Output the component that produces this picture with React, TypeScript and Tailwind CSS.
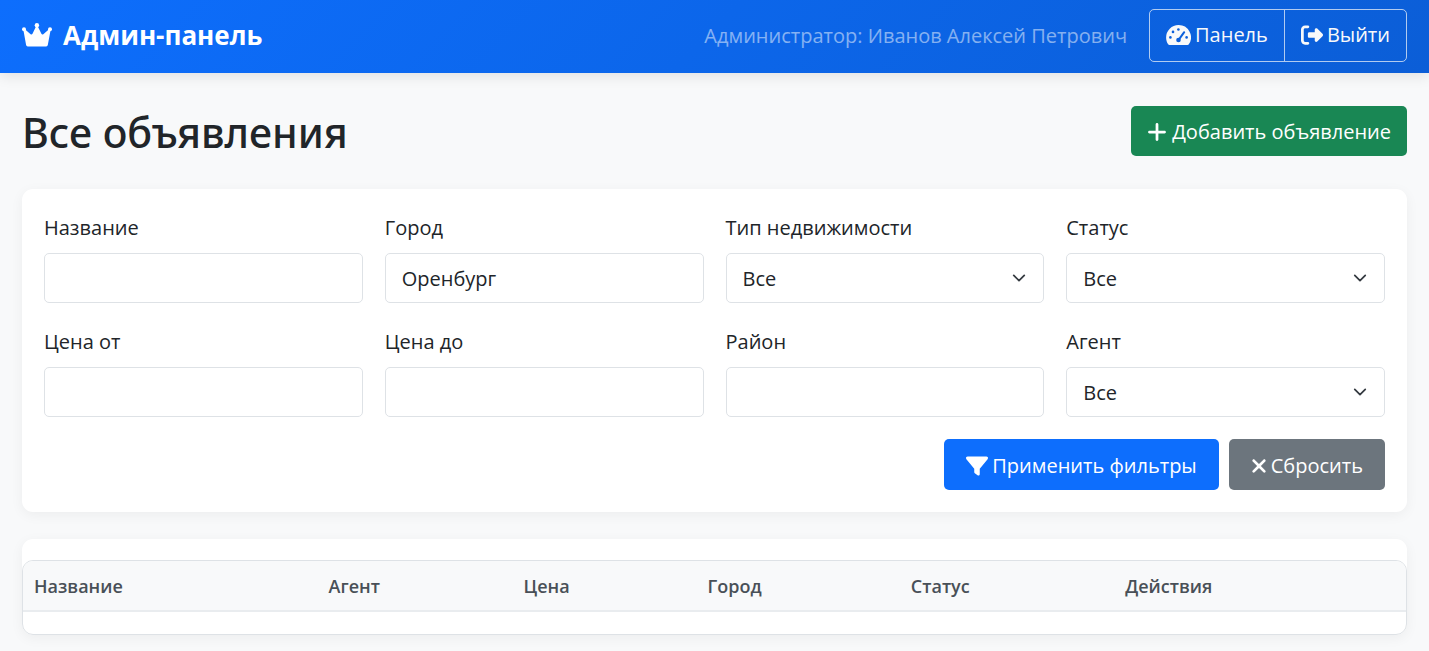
import React from "react";
import { FaPlus, FaFilter, FaXmark, FaRightFromBracket } from "react-icons/fa6";

const control =
  "block h-[50px] w-full rounded-[5px] border border-[#dee2e6] bg-white px-4 text-xl text-[#212529] outline-none focus:border-[#86b7fe]";

function CrownIcon() {
  return (
    <svg viewBox="0 0 30 24" className="h-6 w-[30px] fill-current" aria-hidden="true">
      <circle cx="2" cy="6.3" r="2" />
      <circle cx="14.9" cy="2.2" r="2.2" />
      <circle cx="28" cy="6.3" r="2" />
      <path d="M1.3 6.6 2.9 6.2 8.6 11.3Q9.8 12 10.5 10.8L14 3.5H15.8L19.4 10.8Q20.1 12 21.3 11.3L27 6.2 28.7 6.6 25.8 22.1Q25.5 23.5 24.2 23.5H5.7Q4.4 23.5 4.1 22.1Z" />
    </svg>
  );
}

function GaugeIcon() {
  return (
    <svg viewBox="0 0 25 20" className="h-5 w-[25px]" aria-hidden="true">
      <path
        fill="currentColor"
        d="M12.5 0A12.4 12.4 0 0 0 .1 12.4C.1 14.9.8 17.2 2 19.1 2.3 19.7 2.9 20 3.5 20H21.5C22.1 20 22.7 19.7 23 19.1A12.4 12.4 0 0 0 12.5 0Z"
      />
      <g className="fill-[#0b5fdb]">
        <circle cx="12.4" cy="4.5" r="1.3" />
        <circle cx="7" cy="6.9" r="1.3" />
        <circle cx="4.4" cy="12.4" r="1.3" />
        <circle cx="20.6" cy="12.4" r="1.3" />
        <circle cx="12.5" cy="15" r="2.3" />
      </g>
      <path d="M12.8 14.6 18.2 7.2" className="stroke-[#0b5fdb] stroke-2" strokeLinecap="round" />
    </svg>
  );
}

function TextField({ id, label, value }: { id: string; label: string; value?: string }) {
  return (
    <div>
      <label htmlFor={id} className="mb-2 block text-xl leading-[34px]">
        {label}
      </label>
      <input id={id} type="text" defaultValue={value} className={control} />
    </div>
  );
}

function SelectField({ id, label }: { id: string; label: string }) {
  return (
    <div>
      <label htmlFor={id} className="mb-2 block text-xl leading-[34px]">
        {label}
      </label>
      <div className="relative">
        <select id={id} className={`${control} appearance-none pt-0.5`}>
          <option>Все</option>
        </select>
        <svg
          viewBox="0 0 16 16"
          className="pointer-events-none absolute top-[18px] right-[18px] size-3.5 fill-none stroke-[#343a40] stroke-2"
          strokeLinecap="round"
          strokeLinejoin="round"
        >
          <path d="m2 5 6 6 6-6" />
        </svg>
      </div>
    </div>
  );
}

export default function App() {
  return (
    <div className="min-h-screen bg-[#f8f9fa] font-['Open_Sans','Noto_Sans',sans-serif] text-xl text-[#212529]">
      <header className="flex items-center justify-between bg-linear-135 from-[#0d6efd] to-[#0b5ed7] px-[22px] pt-[9px] pb-[11px] shadow-[0_3px_13px_rgba(0,0,0,0.1)]">
        <a href="#" className="flex items-center gap-[11px] text-[26px] font-bold text-white">
          <CrownIcon />
          Админ-панель
        </a>
        <div className="flex items-center gap-[22px]">
          <span className="text-white/50">Администратор: Иванов Алексей Петрович</span>
          <nav className="flex divide-x divide-[#f8f9fa]/70 rounded-[5px] border border-[#f8f9fa]/70 text-[#f8f9fa]">
            <a href="#" className="flex h-[51px] items-center gap-1 px-4 pb-0.5">
              <GaugeIcon />
              Панель
            </a>
            <a href="#" className="flex h-[51px] items-center gap-1 px-4 pb-0.5">
              <FaRightFromBracket className="size-[22px]" />
              Выйти
            </a>
          </nav>
        </div>
      </header>

      <main className="px-[22px] pt-[33px] pb-4">
        <div className="flex items-center justify-between">
          <h1 className="pt-0.5 font-['Noto_Sans','Open_Sans',sans-serif] text-[41px] leading-[48px] font-medium">
            Все объявления
          </h1>
          <button
            type="button"
            className="flex h-[50px] items-center gap-[5px] rounded-[5px] bg-[#198754] px-4 pt-0.5 text-white"
          >
            <FaPlus className="h-[22px] w-5" />
            Добавить объявление
          </button>
        </div>

        <form className="mt-[33px] rounded-[11px] bg-white p-[22px] shadow-[0_3px_13px_rgba(0,0,0,0.05)]">
          <div className="grid grid-cols-4 gap-[22px]">
            <TextField id="title" label="Название" />
            <TextField id="city" label="Город" value="Оренбург" />
            <SelectField id="type" label="Тип недвижимости" />
            <SelectField id="status" label="Статус" />
            <TextField id="price-from" label="Цена от" />
            <TextField id="price-to" label="Цена до" />
            <TextField id="district" label="Район" />
            <SelectField id="agent" label="Агент" />
          </div>
          <div className="mt-[22px] flex justify-end gap-2.5 text-white">
            <button
              type="submit"
              className="flex h-[51px] items-center gap-1 rounded-[5px] bg-[#0d6efd] px-[22px] pt-0.5"
            >
              <FaFilter className="size-[22px]" />
              Применить фильтры
            </button>
            <button
              type="reset"
              className="flex h-[51px] items-center gap-1 rounded-[5px] bg-[#6c757d] px-[22px] pt-0.5"
            >
              <FaXmark className="h-[22px] w-4" />
              Сбросить
            </button>
          </div>
        </form>

        <section className="mt-[27px] rounded-[11px] bg-white pt-[21px] shadow-[0_3px_13px_rgba(0,0,0,0.05)]">
          <div className="overflow-hidden rounded-[11px] border border-[#dee2e6] pb-[22px]">
            <table className="w-full table-fixed text-left text-lg text-[#495057]">
              <thead className="border-b-2 border-[#e9ecef] bg-[#f8f9fa]">
                <tr>
                  <th className="h-[50px] w-[21.3%] px-[11px] font-semibold">Название</th>
                  <th className="w-[14.1%] px-[11px] font-semibold">Агент</th>
                  <th className="w-[13.3%] px-[11px] font-semibold">Цена</th>
                  <th className="w-[14.7%] px-[11px] font-semibold">Город</th>
                  <th className="w-[15.5%] px-[11px] font-semibold">Статус</th>
                  <th className="px-[11px] font-semibold">Действия</th>
                </tr>
              </thead>
              <tbody />
            </table>
          </div>
        </section>
      </main>
    </div>
  );
}
